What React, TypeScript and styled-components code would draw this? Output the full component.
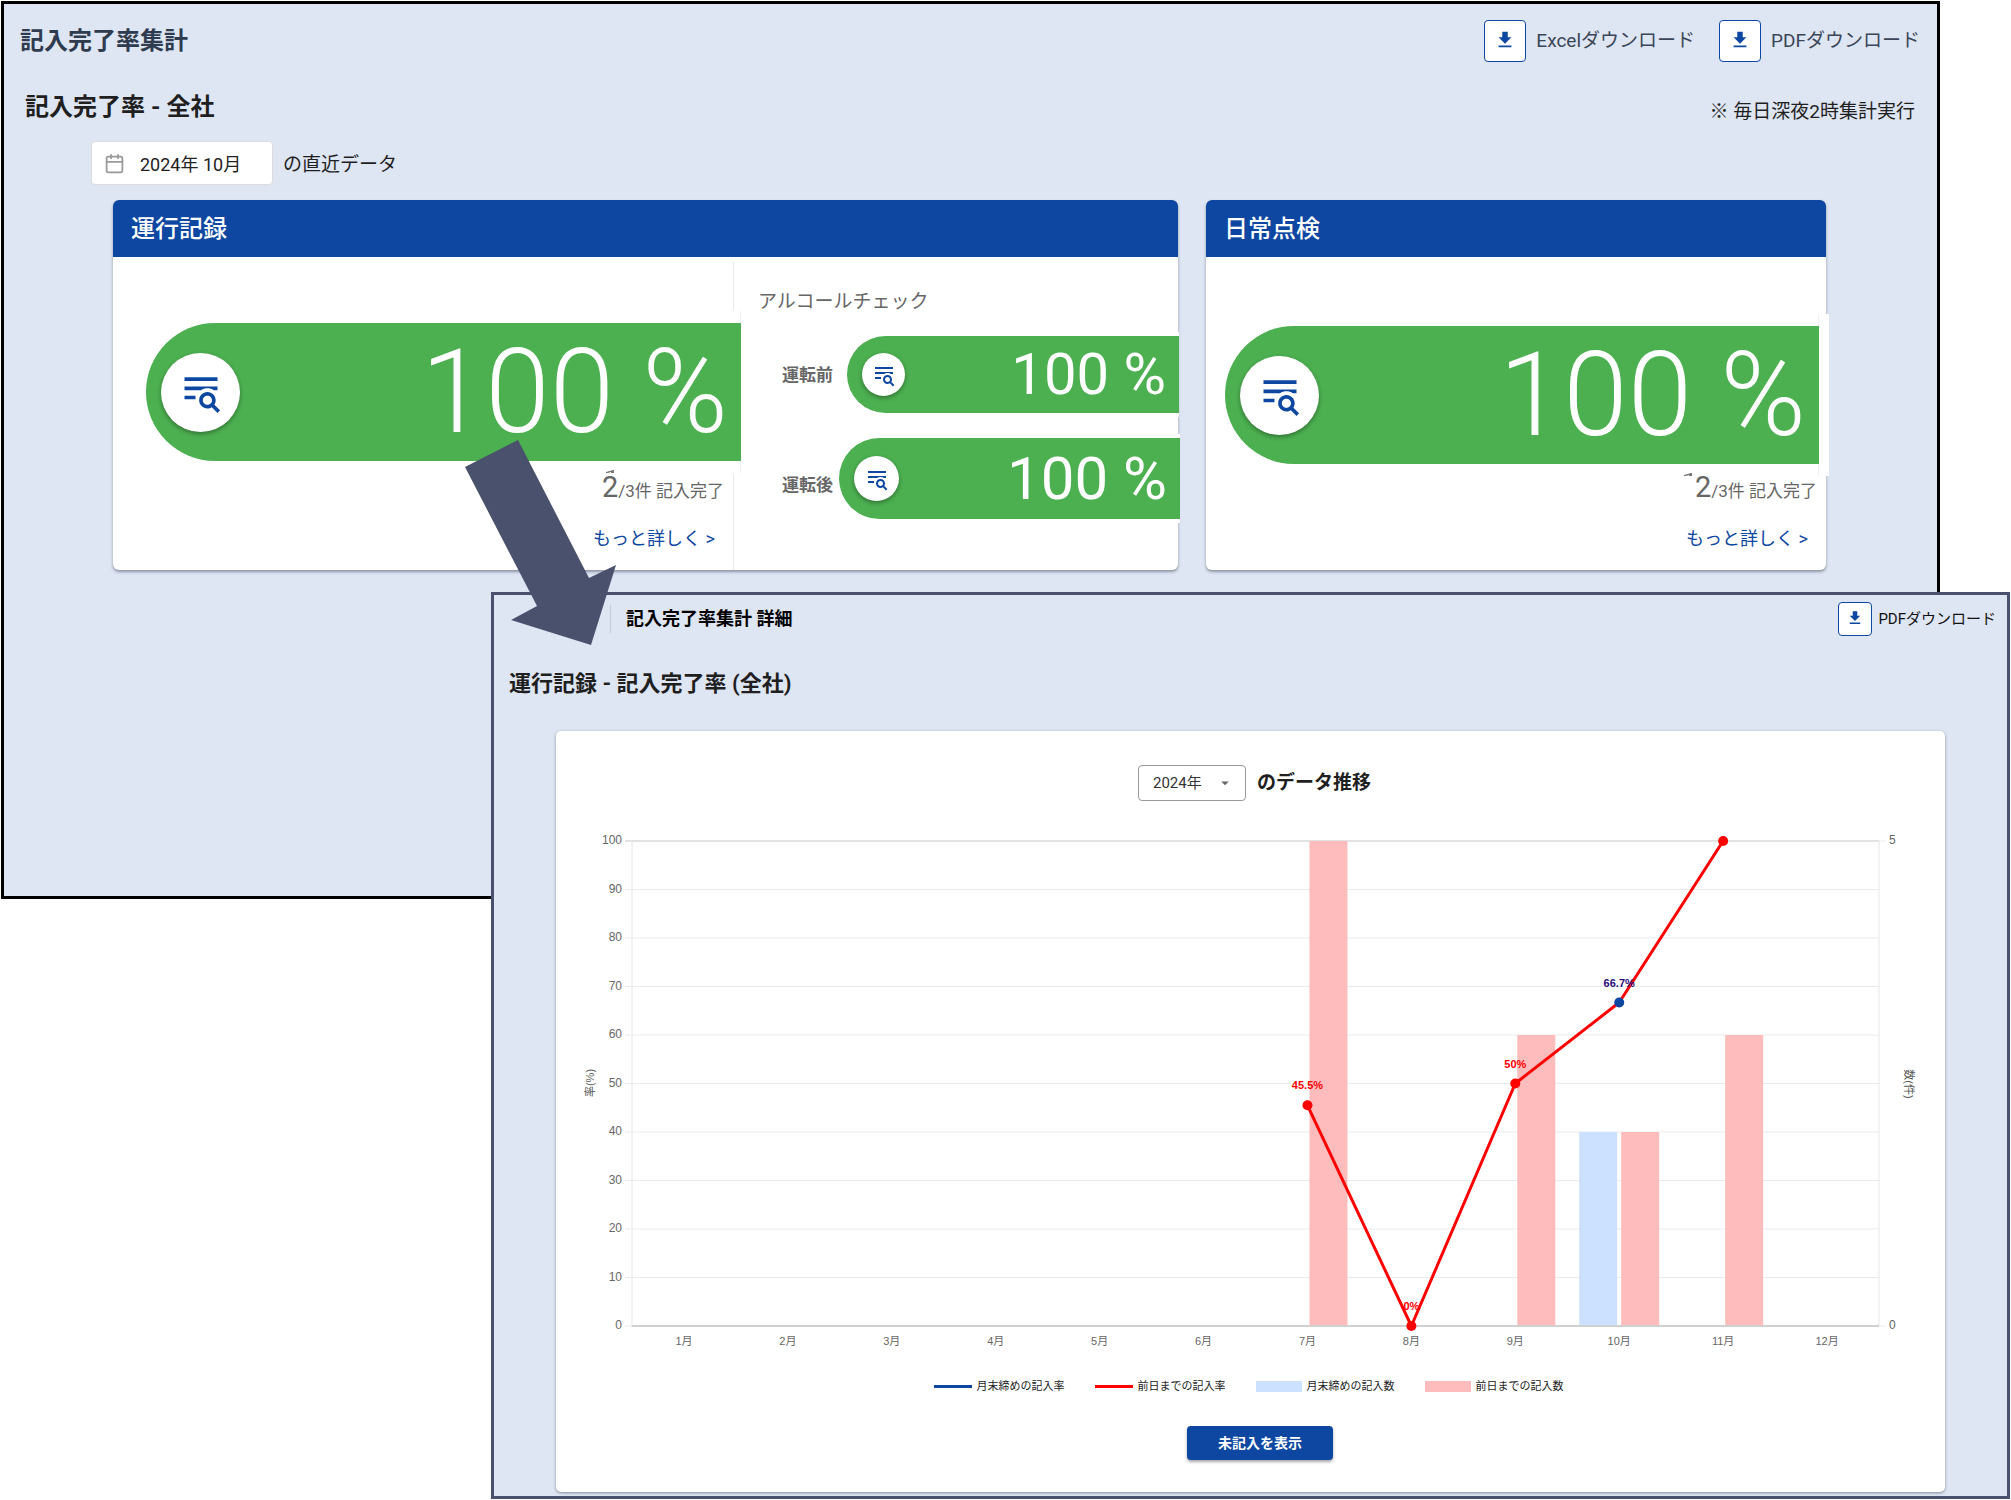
import React from 'react';
import styled, { createGlobalStyle } from 'styled-components';
import { Calendar } from 'lucide-react';

const BLUE = '#0d47a1';
const GREEN = '#4caf50';
const SLATE = '#4a516d';
const RED = '#ff0000';
const BAR_RED = '#ffbcbc';
const BAR_BLUE = '#cce0ff';

const GlobalStyle = createGlobalStyle`
  *, *::before, *::after { box-sizing: border-box; }
  body {
    margin: 0;
    background: #fff;
    color: #1f1f1f;
    font-family: Roboto, "Noto Sans CJK JP", sans-serif;
  }
  h1, h2, h3, p { margin: 0; }
  button, input, select { font-family: inherit; color: inherit; }
`;

const Stage = styled.main`
  position: relative;
  padding: 1px;
`;

/* ---------- windows ---------- */

const SummaryWindow = styled.section`
  margin-right: 70px;
  padding-bottom: 326px;
  border: 3px solid #000;
  background: #dee5f3;
`;

const DetailWindow = styled.section`
  position: relative;
  margin: -307px 0 0 490px;
  padding-bottom: 4px;
  border: 3px solid ${SLATE};
  background: #dee5f3;
`;

const SummaryHeader = styled.header`
  display: flex;
  align-items: center;
  justify-content: space-between;
  padding: 16px 17px 0 16px;
`;

const SummaryTitle = styled.h1`
  font-size: 24px;
  line-height: 36px;
  font-weight: 700;
  color: #2f3b4e;
`;

const Actions = styled.div`
  display: flex;
  gap: 24px;
`;

const Download = styled.button<{ $small?: boolean }>`
  display: flex;
  align-items: center;
  gap: ${p => (p.$small ? 6 : 10)}px;
  padding: 0;
  border: 0;
  background: none;
  font-size: ${p => (p.$small ? 15 : 19)}px;
  line-height: 24px;
  color: ${p => (p.$small ? '#111' : '#3b4658')};
  cursor: pointer;
`;

const DownloadBox = styled.span<{ $small?: boolean }>`
  display: grid;
  place-items: center;
  width: ${p => (p.$small ? 34 : 42)}px;
  height: ${p => (p.$small ? 34 : 42)}px;
  border: 1px solid ${BLUE};
  border-radius: 4px;
  background: #fff;
  padding-bottom: 2px;
`;

const SubRow = styled.div`
  display: flex;
  justify-content: space-between;
  padding: 27px 22px 0 21px;
`;

const SubTitle = styled.h2`
  font-size: 24px;
  line-height: 36px;
  font-weight: 700;
`;

const Note = styled.p`
  padding-top: 9px;
  font-size: 19px;
  line-height: 27px;
`;

const PeriodRow = styled.div`
  display: flex;
  align-items: center;
  gap: 10px;
  padding: 16px 0 15px 87px;
  font-size: 19px;
  line-height: 28px;
`;

const PeriodText = styled.span`
  padding-top: 4px;
`;

const DateField = styled.label`
  display: flex;
  align-items: center;
  gap: 15px;
  width: 182px;
  height: 44px;
  padding: 0 12px;
  border: 1px solid #dcdcdc;
  border-radius: 4px;
  background: #fff;
  color: #999;
`;

const DateInput = styled.input`
  flex: 1;
  min-width: 0;
  padding: 0;
  border: 0;
  outline: 0;
  background: none;
  color: #222;
  font-size: 18px;
`;

/* ---------- rate cards ---------- */

const Cards = styled.div`
  display: grid;
  grid-template-columns: 1065fr 620fr;
  gap: 28px;
  padding: 0 111px 0 109px;
`;

const Card = styled.article`
  border-radius: 6px;
  background: #fff;
  box-shadow: 0 2px 3px rgba(40, 50, 70, 0.45);
`;

const CardTitle = styled.h3`
  padding: 11px 18px 10px;
  border-radius: 6px 6px 0 0;
  background: ${BLUE};
  color: #fff;
  font-size: 24px;
  line-height: 36px;
  font-weight: 500;
`;

const CardBody = styled.div<{ $split?: boolean }>`
  display: grid;
  grid-template-columns: ${p => (p.$split ? '620fr 445fr' : '1fr')};
  min-height: 313px;
`;

const RateColumn = styled.div<{ $top: number }>`
  display: flex;
  flex-direction: column;
  min-width: 0;
  padding-top: ${p => p.$top}px;
`;

const RatePatch = styled.div<{ $left: number; $over: number; $inset: number }>`
  position: relative;
  z-index: 1;
  margin: 0 ${p => -p.$over}px 0 ${p => p.$left}px;
  padding: 0 ${p => p.$inset}px 0 0;
  background: #fff;
`;

const PatchEdge = styled.div`
  padding: 12px 0;
  border-right: 1px solid #f0f0f0;
`;

const Pill = styled.div`
  display: flex;
  align-items: center;
  justify-content: space-between;
  height: 138px;
  margin-right: -1px;
  padding: 0 13px 0 15px;
  border-radius: 69px 0 0 69px;
  background: ${GREEN};
  color: #fff;
  font-size: 116px;
  line-height: 138px;
  font-weight: 300;
  white-space: nowrap;
`;

const MiniPill = styled(Pill)<{ $size: number; $font: number }>`
  flex: 1;
  height: ${p => p.$size}px;
  margin-right: 0;
  border-radius: 41px 0 0 41px;
  font-size: ${p => p.$font}px;
  line-height: ${p => p.$size}px;
  font-weight: 400;
`;

const RoundButton = styled.button<{ $size: number }>`
  display: grid;
  place-items: center;
  flex: none;
  width: ${p => p.$size}px;
  height: ${p => p.$size}px;
  padding: 0;
  border: 0;
  border-radius: 50%;
  background: #fff;
  color: ${BLUE};
  box-shadow: 0 2px 4px rgba(0, 0, 0, 0.35);
  cursor: pointer;
`;

const RateFooter = styled.div`
  position: relative;
  z-index: 2;
  display: flex;
  flex-direction: column;
  align-items: flex-end;
  margin-top: auto;
  padding: 0 9px 17px 0;
`;

const CountTick = styled.svg<{ $right: number; $top: number }>`
  position: absolute;
  top: ${p => p.$top}px;
  right: ${p => p.$right}px;
`;

const Count = styled.p`
  color: #666;
  font-size: 17px;
  line-height: 24px;
`;

const CountValue = styled.span`
  font-size: 29px;
  line-height: 0;
`;

const MoreLink = styled.a`
  margin: 22px 9px 0 0;
  color: ${BLUE};
  font-size: 18px;
  line-height: 28px;
  text-decoration: none;
`;

const AlcoholColumn = styled.div`
  min-width: 0;
  margin-top: 5px;
  padding-top: 26px;
  border-left: 1px solid #ececec;
`;

const AlcoholTitle = styled.p`
  padding-left: 24px;
  color: #666;
  font-size: 19px;
  line-height: 28px;
`;

const AlcoholRow = styled.div<{ $over: number; $top: number }>`
  display: flex;
  align-items: center;
  margin: ${p => p.$top}px ${p => -p.$over}px 0 48px;
`;

const AlcoholLabel = styled.span<{ $low?: boolean }>`
  flex: none;
  width: 51px;
  margin-right: ${p => (p.$low ? 6 : 14)}px;
  padding-top: ${p => (p.$low ? 12 : 0)}px;
  color: #666;
  font-size: 17px;
  line-height: 24px;
  font-weight: 700;
  white-space: nowrap;
`;

const AlcoholPatch = styled.div`
  display: flex;
  flex: 1;
  padding: 4px 0;
  background: #fff;
`;

/* ---------- detail window ---------- */

const DetailHeader = styled.header`
  display: flex;
  align-items: center;
  justify-content: space-between;
  height: 47px;
  padding: 0 11px 0 116px;
`;

const DetailTitle = styled.h1`
  padding-left: 15px;
  border-left: 1px solid #c6cddb;
  color: #000;
  font-size: 18px;
  line-height: 28px;
  font-weight: 700;
`;

const DetailSubTitle = styled.h2`
  padding: 24px 15px 29px;
  font-size: 22px;
  line-height: 36px;
  font-weight: 700;
`;

const ChartCard = styled.article`
  margin: 0 62px;
  padding: 34px 0 32px;
  border-radius: 5px;
  background: #fff;
  box-shadow: 0 1px 3px rgba(40, 50, 70, 0.5);
`;

const YearRow = styled.div`
  display: flex;
  align-items: center;
  justify-content: center;
  gap: 11px;
  padding-left: 8px;
  font-size: 19px;
  line-height: 28px;
  font-weight: 700;
`;

const SelectBox = styled.span`
  display: grid;
  align-items: center;
  width: 108px;
  height: 36px;
`;

const YearSelect = styled.select`
  grid-area: 1 / 1;
  width: 100%;
  height: 36px;
  padding: 0 14px;
  border: 1px solid #999;
  border-radius: 4px;
  background: #fff;
  appearance: none;
  color: #333;
  font-size: 15px;
`;

const SelectArrow = styled.svg`
  grid-area: 1 / 1;
  justify-self: end;
  margin-right: 12px;
  pointer-events: none;
`;

const Chart = styled.svg`
  display: block;
  width: 100%;
  margin-top: 20px;
  font-family: "Liberation Sans", "Noto Sans CJK JP", sans-serif;
`;

const Legend = styled.ul`
  display: flex;
  justify-content: center;
  gap: 30px;
  margin: 20px 0 0;
  padding: 0 4px 0 0;
  list-style: none;
  font-family: "Liberation Sans", "Noto Sans CJK JP", sans-serif;
  font-size: 11px;
  line-height: 20px;
  color: #222;
`;

const LegendItem = styled.li`
  display: flex;
  align-items: center;
  gap: 5px;
`;

const Swatch = styled.span<{ $color: string; $line?: boolean }>`
  width: ${p => (p.$line ? 38 : 46)}px;
  height: ${p => (p.$line ? 3 : 11)}px;
  background: ${p => p.$color};
`;

const ButtonRow = styled.div`
  display: flex;
  justify-content: center;
  padding: 30px 0 0 19px;
`;

const PrimaryButton = styled.button`
  width: 146px;
  height: 34px;
  padding: 0 0 2px;
  border: 0;
  border-radius: 4px;
  background: ${BLUE};
  color: #fff;
  font-size: 14px;
  font-weight: 700;
  box-shadow: 0 2px 3px rgba(0, 0, 0, 0.35);
  cursor: pointer;
`;

const FlowArrow = styled.svg`
  position: absolute;
  z-index: 3;
  top: 439px;
  left: 465px;
  pointer-events: none;
`;

/* ---------- icons ---------- */

const DownloadIcon = ({ size }: { size: number }) => (
  <svg width={size} height={size} viewBox="0 0 24 24" fill={BLUE} aria-hidden="true">
    <path d="M19 9h-4V3H9v6H5l7 7 7-7zM5 18v2h14v-2H5z" />
  </svg>
);

const TextSearchIcon = ({ size }: { size: number }) => (
  <svg width={size} height={size} viewBox="0 0 24 24" fill="currentColor" aria-hidden="true">
    <path d="M19.31 18.9L22.39 22L21 23.39L17.88 20.32C17.19 20.75 16.37 21 15.5 21C13 21 11 19 11 16.5C11 14 13 12 15.5 12C18 12 20 14 20 16.5C20 17.38 19.75 18.21 19.31 18.9M15.5 19C16.88 19 18 17.88 18 16.5C18 15.12 16.88 14 15.5 14C14.12 14 13 15.12 13 16.5C13 17.88 14.12 19 15.5 19M21 4V6H3V4H21M3 16V14H9V16H3M3 11V9H21V11H18.97C17.96 10.37 16.77 10 15.5 10C14.23 10 13.04 10.37 12.03 11H3Z" />
  </svg>
);

/* ---------- parts ---------- */

const DownloadButton = ({ label, small }: { label: string; small?: boolean }) => (
  <Download type="button" $small={small}>
    <DownloadBox $small={small}>
      <DownloadIcon size={small ? 18 : 22} />
    </DownloadBox>
    {label}
  </Download>
);

type RateProps = { top: number; left: number; over: number; inset: number; tickRight: number; tickTop: number };

const Rate = ({ top, left, over, inset, tickRight, tickTop }: RateProps) => (
  <RateColumn $top={top}>
    <RatePatch $left={left} $over={over} $inset={inset}>
      <PatchEdge>
        <Pill>
          <RoundButton type="button" $size={79} aria-label="詳細">
            <TextSearchIcon size={44} />
          </RoundButton>
          100 %
        </Pill>
      </PatchEdge>
    </RatePatch>
    <RateFooter>
      <CountTick $right={tickRight} $top={tickTop} width="8" height="3" viewBox="0 0 8 3" aria-hidden="true">
        <path d="M0 3 L0 2 L7 0 L8 0 L8 3 L5 3 L5 2 L2 3 Z" fill="#777" />
      </CountTick>
      <Count>
        <CountValue>2</CountValue>/3件 記入完了
      </Count>
      <MoreLink href="#detail">もっと詳しく &gt;</MoreLink>
    </RateFooter>
  </RateColumn>
);

/* ---------- chart ---------- */

const PLOT = { left: 76, right: 1323, top: 20, bottom: 505 };
const STEP = (PLOT.right - PLOT.left) / 12;
const centre = (month: number) => PLOT.left + STEP * (month - 0.5);
const level = (percent: number) => PLOT.bottom - ((PLOT.bottom - PLOT.top) * percent) / 100;

const bars = [
  { month: 7, side: 1, count: 5, color: BAR_RED },
  { month: 9, side: 1, count: 3, color: BAR_RED },
  { month: 10, side: -1, count: 2, color: BAR_BLUE },
  { month: 10, side: 1, count: 2, color: BAR_RED },
  { month: 11, side: 1, count: 3, color: BAR_RED },
];

const points = [
  { month: 7, rate: 45.5, label: '45.5%', dot: RED, ink: RED },
  { month: 8, rate: 0, label: '0%', dot: RED, ink: RED },
  { month: 9, rate: 50, label: '50%', dot: RED, ink: RED },
  { month: 10, rate: 66.7, label: '66.7%', dot: BLUE, ink: '#2a0a7a' },
  { month: 11, rate: 100, label: '', dot: RED, ink: RED },
];

const TrendChart = () => (
  <Chart viewBox="0 0 1389 535" role="img" aria-label="2024年のデータ推移">
    {Array.from({ length: 11 }, (_, i) => i * 10).map(v => (
      <g key={v}>
        <line x1={PLOT.left - 7} x2={PLOT.right} y1={level(v)} y2={level(v)} stroke={v === 100 ? '#e2e2e2' : '#ebebeb'} strokeWidth={v === 100 ? 2 : 1} />
        <text x={66} y={level(v) + 3} textAnchor="end" fontSize="12" fill="#666">{v}</text>
      </g>
    ))}
    {[0, 5].map(v => (
      <g key={v}>
        <line x1={PLOT.right} x2={PLOT.right + 7} y1={level(v * 20)} y2={level(v * 20)} stroke="#ebebeb" />
        <text x={1333} y={level(v * 20) + 3} fontSize="12" fill="#666">{v}</text>
      </g>
    ))}
    <line x1={PLOT.left} x2={PLOT.left} y1={PLOT.top} y2={PLOT.bottom} stroke="#e6e6e6" />
    <line x1={PLOT.right} x2={PLOT.right} y1={PLOT.top} y2={PLOT.bottom} stroke="#e6e6e6" />
    {bars.map(b => (
      <rect
        key={`${b.month}${b.side}`}
        x={b.side > 0 ? centre(b.month) + 2 : centre(b.month) - 40}
        y={level(b.count * 20)}
        width="38"
        height={PLOT.bottom - level(b.count * 20)}
        fill={b.color}
      />
    ))}
    <line x1={PLOT.left} x2={PLOT.right} y1={PLOT.bottom} y2={PLOT.bottom} stroke="#d0d0d0" strokeWidth="2" />
    <polyline
      points={points.map(p => `${centre(p.month)},${level(p.rate)}`).join(' ')}
      fill="none"
      stroke={RED}
      strokeWidth="3"
      strokeLinejoin="round"
    />
    {points.map(p => (
      <g key={p.month}>
        <circle cx={centre(p.month)} cy={level(p.rate)} r="5" fill={p.dot} />
        <text x={centre(p.month)} y={level(p.rate) - 16} textAnchor="middle" fontSize="11" fontWeight="700" fill={p.ink}>{p.label}</text>
      </g>
    ))}
    {Array.from({ length: 12 }, (_, i) => i + 1).map(m => (
      <text key={m} x={centre(m)} y={524} textAnchor="middle" fontSize="11" fill="#666">{m}月</text>
    ))}
    <text transform="translate(38 262) rotate(-90)" textAnchor="middle" fontSize="11" fill="#555">率(%)</text>
    <text transform="translate(1349 263) rotate(90)" textAnchor="middle" fontSize="11" fill="#555">数(件)</text>
  </Chart>
);

export default function App() {
  return (
    <>
      <GlobalStyle />
      <Stage>
        <SummaryWindow>
          <SummaryHeader>
            <SummaryTitle>記入完了率集計</SummaryTitle>
            <Actions>
              <DownloadButton label="Excelダウンロード" />
              <DownloadButton label="PDFダウンロード" />
            </Actions>
          </SummaryHeader>
          <SubRow>
            <SubTitle>記入完了率 - 全社</SubTitle>
            <Note>※ 毎日深夜2時集計実行</Note>
          </SubRow>
          <PeriodRow>
            <DateField>
              <Calendar size={21} strokeWidth={2} aria-hidden="true" />
              <DateInput aria-label="対象年月" defaultValue="2024年 10月" />
            </DateField>
            <PeriodText>の直近データ</PeriodText>
          </PeriodRow>
          <Cards>
            <Card>
              <CardTitle>運行記録</CardTitle>
              <CardBody $split>
                <Rate top={54} left={33} over={8} inset={0} tickRight={119} tickTop={-9} />
                <AlcoholColumn>
                  <AlcoholTitle>アルコールチェック</AlcoholTitle>
                  <AlcoholRow $top={16} $over={1}>
                    <AlcoholLabel>運転前</AlcoholLabel>
                    <AlcoholPatch>
                      <MiniPill $size={77} $font={58}>
                        <RoundButton type="button" $size={43} aria-label="運転前の詳細">
                          <TextSearchIcon size={24} />
                        </RoundButton>
                        100 %
                      </MiniPill>
                    </AlcoholPatch>
                  </AlcoholRow>
                  <AlcoholRow $top={17} $over={2}>
                    <AlcoholLabel $low>運転後</AlcoholLabel>
                    <AlcoholPatch>
                      <MiniPill $size={81} $font={60}>
                        <RoundButton type="button" $size={45} aria-label="運転後の詳細">
                          <TextSearchIcon size={24} />
                        </RoundButton>
                        100 %
                      </MiniPill>
                    </AlcoholPatch>
                  </AlcoholRow>
                </AlcoholColumn>
              </CardBody>
            </Card>
            <Card>
              <CardTitle>日常点検</CardTitle>
              <CardBody>
                <Rate top={57} left={19} over={3} inset={10} tickRight={134} tickTop={-6} />
              </CardBody>
            </Card>
          </Cards>
        </SummaryWindow>

        <DetailWindow id="detail">
          <DetailHeader>
            <DetailTitle>記入完了率集計 詳細</DetailTitle>
            <DownloadButton label="PDFダウンロード" small />
          </DetailHeader>
          <DetailSubTitle>運行記録 - 記入完了率 (全社)</DetailSubTitle>
          <ChartCard>
            <YearRow>
              <SelectBox>
                <YearSelect aria-label="年" defaultValue="2024">
                  <option value="2024">2024年</option>
                </YearSelect>
                <SelectArrow width="18" height="18" viewBox="0 0 24 24" fill="#666" aria-hidden="true">
                  <path d="M7 10l5 5 5-5z" />
                </SelectArrow>
              </SelectBox>
              <span>のデータ推移</span>
            </YearRow>
            <TrendChart />
            <Legend>
              <LegendItem><Swatch $color={BLUE} $line />月末締めの記入率</LegendItem>
              <LegendItem><Swatch $color={RED} $line />前日までの記入率</LegendItem>
              <LegendItem><Swatch $color={BAR_BLUE} />月末締めの記入数</LegendItem>
              <LegendItem><Swatch $color={BAR_RED} />前日までの記入数</LegendItem>
            </Legend>
            <ButtonRow>
              <PrimaryButton type="button">未記入を表示</PrimaryButton>
            </ButtonRow>
          </ChartCard>
        </DetailWindow>

        <FlowArrow width="152" height="207" viewBox="0 0 152 207" fill={SLATE} aria-hidden="true">
          <polygon points="0,28 53,1 124,139 151,126 126,206 46,181 72,167" />
        </FlowArrow>
      </Stage>
    </>
  );
}
